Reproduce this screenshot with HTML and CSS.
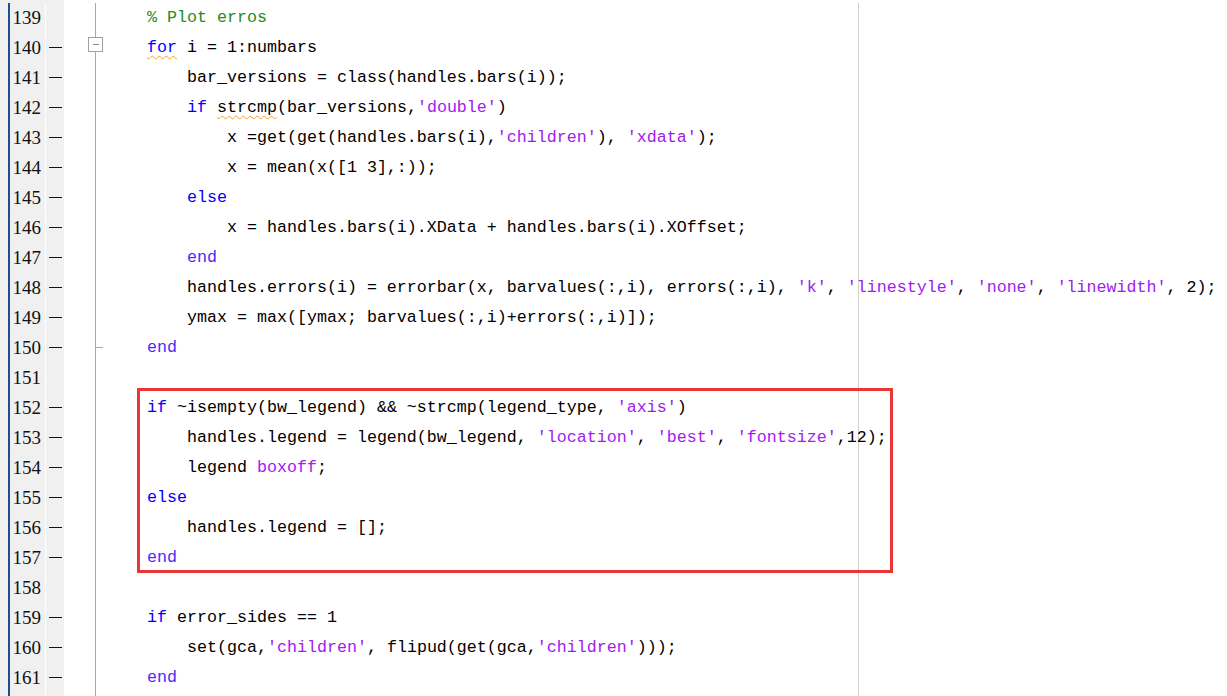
FILE: index.html
```html
<!DOCTYPE html>
<html>
<head>
<meta charset="utf-8">
<link rel="stylesheet" href="styles.css">
</head>
<body>
<div class="editor">
  <div class="row"><div class="edge"></div><div class="ln">139</div><div class="mk"></div><div class="fold"></div><div class="code">    <span class="cm">% Plot erros</span></div></div>
  <div class="row"><div class="edge"></div><div class="ln">140</div><div class="mk on"></div><div class="fold"><span class="fbox"></span></div><div class="code">    <span class="kw warn">for</span> i = 1:numbars</div></div>
  <div class="row"><div class="edge"></div><div class="ln">141</div><div class="mk on"></div><div class="fold"></div><div class="code">        bar_versions = class(handles.bars(i));</div></div>
  <div class="row"><div class="edge"></div><div class="ln">142</div><div class="mk on"></div><div class="fold"></div><div class="code">        <span class="kw">if</span> <span class="warn">strcmp</span>(bar_versions,<span class="st">'double'</span>)</div></div>
  <div class="row"><div class="edge"></div><div class="ln">143</div><div class="mk on"></div><div class="fold"></div><div class="code">            x =get(get(handles.bars(i),<span class="st">'children'</span>), <span class="st">'xdata'</span>);</div></div>
  <div class="row"><div class="edge"></div><div class="ln">144</div><div class="mk on"></div><div class="fold"></div><div class="code">            x = mean(x([1 3],:));</div></div>
  <div class="row"><div class="edge"></div><div class="ln">145</div><div class="mk on"></div><div class="fold"></div><div class="code">        <span class="kw">else</span></div></div>
  <div class="row"><div class="edge"></div><div class="ln">146</div><div class="mk on"></div><div class="fold"></div><div class="code">            x = handles.bars(i).XData + handles.bars(i).XOffset;</div></div>
  <div class="row"><div class="edge"></div><div class="ln">147</div><div class="mk on"></div><div class="fold"></div><div class="code">        <span class="kw end">end</span></div></div>
  <div class="row"><div class="edge"></div><div class="ln">148</div><div class="mk on"></div><div class="fold"></div><div class="code">        handles.errors(i) = errorbar(x, barvalues(:,i), errors(:,i), <span class="st">'k'</span>, <span class="st">'linestyle'</span>, <span class="st">'none'</span>, <span class="st">'linewidth'</span>, 2);</div></div>
  <div class="row"><div class="edge"></div><div class="ln">149</div><div class="mk on"></div><div class="fold"></div><div class="code">        ymax = max([ymax; barvalues(:,i)+errors(:,i)]);</div></div>
  <div class="row"><div class="edge"></div><div class="ln">150</div><div class="mk on"></div><div class="fold fend"></div><div class="code">    <span class="kw end">end</span></div></div>
  <div class="row"><div class="edge"></div><div class="ln">151</div><div class="mk"></div><div class="fold"></div><div class="code"></div></div>
  <div class="group">
    <div class="row"><div class="edge"></div><div class="ln">152</div><div class="mk on"></div><div class="fold"></div><div class="code">    <span class="kw">if</span> ~isempty(bw_legend) &amp;&amp; ~strcmp(legend_type, <span class="st">'axis'</span>)</div></div>
    <div class="row"><div class="edge"></div><div class="ln">153</div><div class="mk on"></div><div class="fold"></div><div class="code">        handles.legend = legend(bw_legend, <span class="st">'location'</span>, <span class="st">'best'</span>, <span class="st">'fontsize'</span>,12);</div></div>
    <div class="row"><div class="edge"></div><div class="ln">154</div><div class="mk on"></div><div class="fold"></div><div class="code">        legend <span class="st">boxoff</span>;</div></div>
    <div class="row"><div class="edge"></div><div class="ln">155</div><div class="mk on"></div><div class="fold"></div><div class="code">    <span class="kw">else</span></div></div>
    <div class="row"><div class="edge"></div><div class="ln">156</div><div class="mk on"></div><div class="fold"></div><div class="code">        handles.legend = [];</div></div>
    <div class="row"><div class="edge"></div><div class="ln">157</div><div class="mk on"></div><div class="fold"></div><div class="code">    <span class="kw end">end</span></div></div>
  </div>
  <div class="row"><div class="edge"></div><div class="ln">158</div><div class="mk"></div><div class="fold"></div><div class="code"></div></div>
  <div class="row"><div class="edge"></div><div class="ln">159</div><div class="mk on"></div><div class="fold"></div><div class="code">    <span class="kw">if</span> error_sides == 1</div></div>
  <div class="row"><div class="edge"></div><div class="ln">160</div><div class="mk on"></div><div class="fold"></div><div class="code">        set(gca,<span class="st">'children'</span>, flipud(get(gca,<span class="st">'children'</span>)));</div></div>
  <div class="row"><div class="edge"></div><div class="ln">161</div><div class="mk on"></div><div class="fold"></div><div class="code">    <span class="kw end">end</span></div></div>
  <div class="row"><div class="edge"></div><div class="ln"></div><div class="mk"></div><div class="fold"></div><div class="code"></div></div>
</div>
</body>
</html>
```
FILE: styles.css
```css
html, body {
  margin: 0;
  padding: 0;
  background: #ffffff;
  overflow: hidden;
}

.editor {
  width: 1227px;
  height: 696px;
  overflow: hidden;
  background: linear-gradient(#f0f0f0, #f0f0f0) 0 0 / 64px 3px no-repeat;
  padding-top: 3px;
  box-sizing: border-box;
}

.row {
  display: flex;
  height: 30px;
}

.edge {
  width: 8px;
  flex: none;
  background: #f0f0f0;
}

.ln {
  width: 31px;
  flex: none;
  border-left: 2px solid #1d4f8c;
  background: #f0f0f0;
  padding-right: 4px;
  text-align: right;
  font-family: "Liberation Serif", serif;
  font-size: 19px;
  line-height: 30px;
  color: #111;
}

.mk {
  width: 18px;
  flex: none;
  margin-left: 1px;
  background: #f0f0f0;
  position: relative;
}

.mk.on::before {
  content: "";
  position: absolute;
  left: 3px;
  top: 14px;
  width: 13px;
  height: 1px;
  background: #111;
}

.fold {
  width: 43px;
  flex: none;
  position: relative;
  background: linear-gradient(#a8a8a8, #a8a8a8) 31px 0 / 1px 100% no-repeat;
}

.fend {
  background:
    linear-gradient(#a8a8a8, #a8a8a8) 31px 0 / 1px 100% no-repeat,
    linear-gradient(#a8a8a8, #a8a8a8) 32px 14px / 7px 1px no-repeat;
}

.fbox {
  position: absolute;
  left: 24px;
  top: 4px;
  width: 13px;
  height: 13px;
  border: 1px solid #a0a0a0;
  background: #fff;
}

.fbox::before {
  content: "";
  position: absolute;
  left: 4px;
  top: 6px;
  width: 6px;
  height: 1px;
  background: #909090;
}

.code {
  flex: 1;
  white-space: pre;
  font-family: "Liberation Mono", monospace;
  font-size: 16.67px;
  line-height: 30px;
  color: #000;
  background: linear-gradient(#d0d0d0, #d0d0d0) 751px 0 / 1px 100% no-repeat;
}

.kw { color: #0000ff; }
.kw.end { color: #4a2cf2; }
.st { color: #a020f0; }
.cm { color: #228b22; }

.warn {
  text-decoration: underline wavy #f0a030;
  text-decoration-thickness: 1px;
  text-underline-offset: 3px;
}

.group {
  position: relative;
}

.group::after {
  content: "";
  position: absolute;
  left: 137px;
  top: -5px;
  width: 756px;
  height: 185px;
  box-sizing: border-box;
  border: 3px solid #ee3535;
  pointer-events: none;
}
```
